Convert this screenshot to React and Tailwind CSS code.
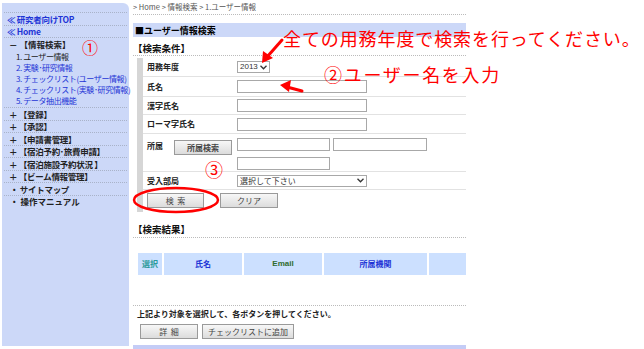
import React from 'react';

const jp = { fontFamily: '"Noto Sans CJK JP", "Liberation Sans", sans-serif' };

const SideLink = ({ children, blue, className = '' }) => (
  <div className={`h-[12.5px] flex items-center whitespace-nowrap border-b border-dotted border-[#a9b3c9] text-[8.5px] tracking-[-0.3px] leading-none ${blue ? 'text-[#1f35d6]' : 'text-[#222]'} ${className}`}>
    {children}
  </div>
);

const Btn = ({ children, className = '' }) => (
  <div className={`h-[15px] flex items-center justify-center border border-[#9a9a9a] bg-gradient-to-b from-[#f7f7f7] to-[#dcdcdc] text-[8px] text-[#444] leading-none ${className}`}>
    {children}
  </div>
);

const Input = ({ w }) => <div className={`h-[13px] border border-[#a8a8a8] bg-white ${w}`} />;

const Row = ({ label, h, children }) => (
  <div className={`flex border-b border-[#e2e2e2] ${h}`}>
    <div className="w-[94px] pl-[4px] flex items-center text-[8px] font-bold text-[#222] leading-none">{label}</div>
    <div className="flex-1 flex items-center">{children}</div>
  </div>
);

export default function App() {
  return (
    <div className="relative w-[644px] h-[349px] bg-white overflow-hidden flex" style={jp}>
      {/* sidebar */}
      <div className="ml-[2px] mt-[3px] w-[127px] h-[343px] bg-[#ccd8f8] rounded-tr-[6px] px-[2px] pt-[9px]">
        <div className="border-t border-dotted border-[#a9b3c9]">
          <SideLink blue className="pl-[3px] font-bold">≪ 研究者向けTOP</SideLink>
          <SideLink blue className="pl-[3px] font-bold">≪ Home</SideLink>
          <div className="border-b border-dotted border-[#a9b3c9] pb-[1px]">
            <div className="h-[13px] flex items-center pl-[5px] text-[8.5px] font-bold text-[#222] leading-none">－ 【情報検索】</div>
            <div className="pl-[12px] text-[8px] tracking-[-0.4px] leading-[11px] whitespace-nowrap">
              <div className="text-[#222]">1. ユーザー情報</div>
              <div className="text-[#1f35d6]">2. 実験･研究情報</div>
              <div className="text-[#1f35d6]">3. チェックリスト(ユーザー情報)</div>
              <div className="text-[#1f35d6]">4. チェックリスト(実験･研究情報)</div>
              <div className="text-[#1f35d6]">5. データ抽出機能</div>
            </div>
          </div>
          <SideLink className="pl-[5px] font-bold">＋ 【登録】</SideLink>
          <SideLink className="pl-[5px] font-bold">＋ 【承認】</SideLink>
          <SideLink className="pl-[5px] font-bold">＋ 【申請書管理】</SideLink>
          <SideLink className="pl-[5px] font-bold">＋ 【宿泊予約･旅費申請】</SideLink>
          <SideLink className="pl-[5px] font-bold">＋ 【宿泊施設予約状況 】</SideLink>
          <SideLink className="pl-[5px] font-bold">＋ 【ビーム情報管理】</SideLink>
          <SideLink className="pl-[6px] font-bold">・ サイトマップ</SideLink>
          <div className="h-[12px] flex items-center pl-[6px] text-[8.5px] font-bold text-[#222] leading-none">・ 操作マニュアル</div>
        </div>
      </div>

      {/* main */}
      <div className="ml-[4px] w-[333px] flex flex-col">
        <div className="h-[15px] flex items-center border-b border-dotted border-[#bbb] text-[7.5px] text-[#555] leading-none">
          &gt; Home &gt; 情報検索 &gt; 1.ユーザー情報
        </div>
        <div className="mt-[8px] h-[14px] bg-[#ccd8f8] flex items-center pl-[2px] text-[9px] font-bold text-black leading-none">
          ■ユーザー情報検索
        </div>
        <div className="h-[19px] flex items-end pb-[2px] border-b border-dotted border-[#bbb] text-[9.5px] font-bold text-[#111] leading-none">
          【検索条件】
        </div>
        <div className="mt-[2px] flex">
          <div className="ml-[4px] w-[6px] bg-[#d6d6d6]" />
          <div className="flex-1">
            <Row label="用務年度" h="h-[19px]">
              <div className="h-[12px] w-[33px] border border-[#a8a8a8] flex items-center justify-between px-[2px] text-[8px] text-[#333] leading-none">
                <span style={{ fontFamily: '"Liberation Sans", sans-serif' }}>2013</span>
                <svg width="7" height="5" viewBox="0 0 7 5"><path d="M0.5 0.8 L3.5 3.8 L6.5 0.8" fill="none" stroke="#333" strokeWidth="1.3" /></svg>
              </div>
            </Row>
            <Row label="氏名" h="h-[20px]"><Input w="w-[130px]" /></Row>
            <Row label="漢字氏名" h="h-[18px]"><Input w="w-[130px]" /></Row>
            <Row label="ローマ字氏名" h="h-[19px]"><Input w="w-[130px]" /></Row>
            <div className="flex h-[38px] border-b border-[#e2e2e2]">
              <div className="w-[94px] pl-[4px] pt-[6px] flex text-[8px] font-bold text-[#222] leading-none">
                <span className="mt-[2px]">所属</span>
                <Btn className="ml-[11px] w-[58px] h-[14px]">所属検索</Btn>
              </div>
              <div className="flex-1 pt-[4px] flex flex-col gap-[6px]">
                <div className="flex gap-[3px]"><Input w="w-[93px]" /><Input w="w-[94px]" /></div>
                <Input w="w-[93px]" />
              </div>
            </div>
            <Row label="受入部局" h="h-[18px]">
              <div className="h-[12px] w-[130px] border border-[#a8a8a8] flex items-center justify-between px-[2px] text-[8px] text-[#333] leading-none">
                <span>選択して下さい</span>
                <svg width="7" height="5" viewBox="0 0 7 5"><path d="M0.5 0.8 L3.5 3.8 L6.5 0.8" fill="none" stroke="#333" strokeWidth="1.3" /></svg>
              </div>
            </Row>
            <div className="h-[22px] flex items-start pt-[3px]">
              <Btn className="ml-[4px] w-[57px]">検&nbsp;&nbsp;索</Btn>
              <Btn className="ml-[16px] w-[58px]">クリア</Btn>
            </div>
          </div>
        </div>
        <div className="h-[26px] flex items-end pb-[3px] border-b border-dotted border-[#bbb] text-[9.5px] font-bold text-[#111] leading-none">
          【検索結果】
        </div>
        <div className="mt-[15px] ml-[5px] h-[22px] flex gap-[2px] text-[8px] font-bold leading-none">
          <div className="w-[24px] bg-[#cce0ff] flex items-center justify-center text-[#2a9a9a]">選択</div>
          <div className="w-[78px] bg-[#cce0ff] flex items-center justify-center text-[#1f35d6]">氏名</div>
          <div className="w-[78px] bg-[#cce0ff] flex items-center justify-center text-[#2f6b2f]" style={{ fontFamily: '"Liberation Sans", sans-serif' }}>Email</div>
          <div className="w-[103px] bg-[#cce0ff] flex items-center justify-center text-[#1f35d6]">所属機関</div>
          <div className="flex-1 bg-[#cce0ff]" />
        </div>
        <div className="h-[31px] border-b border-dotted border-[#bbb]" />
        <div className="mt-[3px] pl-[4px] text-[8px] font-bold text-[#222] leading-[10px]">上記より対象を選択して、各ボタンを押してください。</div>
        <div className="mt-[5px] flex gap-[4px] pl-[7px]">
          <Btn className="w-[58px]">詳&nbsp;&nbsp;細</Btn>
          <Btn className="w-[92px]">チェックリストに追加</Btn>
        </div>
        <div className="mt-[6px] h-[4px] bg-[#c4ccf6]" />
      </div>

      {/* annotations */}
      <div className="absolute left-[82px] top-[39px] text-[16px] text-[#ff0000] leading-none">①</div>
      <div className="absolute left-[205px] top-[160px] text-[18px] text-[#ff0000] leading-none">③</div>
      <div className="absolute left-[283px] top-[29px] text-[18px] tracking-[0.9px] text-[#ff0000] leading-none whitespace-nowrap">全ての用務年度で検索を行ってください。</div>
      <div className="absolute left-[324px] top-[65px] text-[18px] tracking-[1.7px] text-[#ff0000] leading-none whitespace-nowrap">②ユーザー名を入力</div>
      <svg className="absolute left-0 top-0" width="644" height="349" viewBox="0 0 644 349">
        <line x1="282" y1="40" x2="267" y2="57" stroke="#ff0000" strokeWidth="3" strokeLinecap="round" />
        <polygon points="262,63 263,51 273,58" fill="#ff0000" />
        <line x1="302" y1="91" x2="287" y2="87" stroke="#ff0000" strokeWidth="3" strokeLinecap="round" />
        <polygon points="280,85 291,80 289,92" fill="#ff0000" />
        <ellipse cx="176" cy="200" rx="42" ry="12" fill="none" stroke="#ff0000" strokeWidth="2.5" />
      </svg>
    </div>
  );
}
